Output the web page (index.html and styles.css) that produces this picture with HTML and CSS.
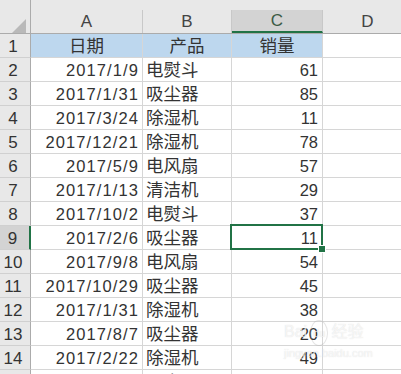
FILE: index.html
```html
<!DOCTYPE html>
<html lang="zh-CN">
<head>
    <meta charset="UTF-8">
    <title>销量表</title>
    <link rel="stylesheet" href="styles.css">
</head>
<body>
    <div class="sheet">
        <!-- Column headers -->
        <div class="row head">
            <div class="rh corner">
                <svg width="14" height="14" viewBox="0 0 14 14"><polygon points="14,0 14,14 0,14" fill="#b9b9b9"/></svg>
            </div>
            <div class="ch a"><span>A</span></div>
            <div class="ch b"><span>B</span></div>
            <div class="ch c on"><span>C</span></div>
            <div class="ch d"><span>D</span></div>
        </div>

        <div class="row">
            <div class="rh">1</div>
            <div class="cell a mid cn title">日期</div>
            <div class="cell b mid cn title">产品</div>
            <div class="cell c mid cn title">销量</div>
            <div class="cell d"></div>
        </div>
        <div class="row">
            <div class="rh">2</div>
            <div class="cell a num date">2017/1/9</div>
            <div class="cell b cn">电熨斗</div>
            <div class="cell c num">61</div>
            <div class="cell d"></div>
        </div>
        <div class="row">
            <div class="rh">3</div>
            <div class="cell a num date">2017/1/31</div>
            <div class="cell b cn">吸尘器</div>
            <div class="cell c num">85</div>
            <div class="cell d"></div>
        </div>
        <div class="row">
            <div class="rh">4</div>
            <div class="cell a num date">2017/3/24</div>
            <div class="cell b cn">除湿机</div>
            <div class="cell c num">11</div>
            <div class="cell d"></div>
        </div>
        <div class="row">
            <div class="rh">5</div>
            <div class="cell a num date">2017/12/21</div>
            <div class="cell b cn">除湿机</div>
            <div class="cell c num">78</div>
            <div class="cell d"></div>
        </div>
        <div class="row">
            <div class="rh">6</div>
            <div class="cell a num date">2017/5/9</div>
            <div class="cell b cn">电风扇</div>
            <div class="cell c num">57</div>
            <div class="cell d"></div>
        </div>
        <div class="row">
            <div class="rh">7</div>
            <div class="cell a num date">2017/1/13</div>
            <div class="cell b cn">清洁机</div>
            <div class="cell c num">29</div>
            <div class="cell d"></div>
        </div>
        <div class="row">
            <div class="rh">8</div>
            <div class="cell a num date">2017/10/2</div>
            <div class="cell b cn">电熨斗</div>
            <div class="cell c num">37</div>
            <div class="cell d"></div>
        </div>
        <div class="row">
            <div class="rh on">9</div>
            <div class="cell a num date">2017/2/6</div>
            <div class="cell b cn">吸尘器</div>
            <div class="cell c num active">11<i class="sel"><b class="handle"></b></i></div>
            <div class="cell d"></div>
        </div>
        <div class="row">
            <div class="rh">10</div>
            <div class="cell a num date">2017/9/8</div>
            <div class="cell b cn">电风扇</div>
            <div class="cell c num">54</div>
            <div class="cell d"></div>
        </div>
        <div class="row">
            <div class="rh">11</div>
            <div class="cell a num date">2017/10/29</div>
            <div class="cell b cn">吸尘器</div>
            <div class="cell c num">45</div>
            <div class="cell d"></div>
        </div>
        <div class="row">
            <div class="rh">12</div>
            <div class="cell a num date">2017/1/31</div>
            <div class="cell b cn">除湿机</div>
            <div class="cell c num">38</div>
            <div class="cell d"></div>
        </div>
        <div class="row">
            <div class="rh">13</div>
            <div class="cell a num date">2017/8/7</div>
            <div class="cell b cn">吸尘器</div>
            <div class="cell c num">20</div>
            <div class="cell d"></div>
        </div>
        <div class="row">
            <div class="rh">14</div>
            <div class="cell a num date">2017/2/22</div>
            <div class="cell b cn">除湿机</div>
            <div class="cell c num">49</div>
            <div class="cell d"></div>
        </div>
        <div class="row">
            <div class="rh">15</div>
            <div class="cell a num date">2017/10/24</div>
            <div class="cell b cn">吸尘器</div>
            <div class="cell c num">41</div>
            <div class="cell d"></div>
        </div>
    </div>

    <!-- site watermark -->
    <div class="mark">
        <div class="mark-logo">Bai<span class="paw">du</span>经验</div>
        <div class="mark-url">jingyan.baidu.com</div>
    </div>
</body>
</html>
```

FILE: styles.css
```css
/* Sheet */
body {
    margin: 0;
    width: 401px;
    height: 374px;
    overflow: hidden;
    background: #ffffff;
    font-family: 'Liberation Sans', 'Noto Sans CJK SC', sans-serif;
    color: #333333;
    position: relative;
}

.sheet {
    width: 413px;
}

.row {
    display: flex;
    height: 24px;
}

.row > div {
    box-sizing: border-box;
    flex: none;
    height: 100%;
}

/* column widths */
.rh { width: 31px; }
.a { width: 112px; }
.b { width: 89px; }
.c { width: 91px; }
.d { width: 90px; }

/* Column header row */
.row.head {
    height: 33px;
    background: #e8e8e8;
    border-bottom: 1px solid #ababab;
}

.ch {
    padding-top: 10px;
}

.ch span {
    display: flex;
    justify-content: center;
    align-items: center;
    height: 100%;
    border-right: 1px solid #c8c8c8;
    font-size: 17px;
    color: #444444;
    padding-top: 1px;
    box-sizing: border-box;
}

.ch.on span {
    background: #d3d3d3;
    border-bottom: 2px solid #217346;
    color: #3b5a45;
}

.corner {
    display: flex;
    align-items: flex-end;
    justify-content: flex-end;
    padding: 0 3px 4px 0;
}

/* Row header */
.rh {
    background: #e8e8e8;
    border-right: 1px solid #ababab;
    border-bottom: 1px solid #d0d0d0;
    font-size: 17px;
    line-height: 23px;
    text-align: center;
    padding: 1px 4px 0 0;
}

.row.head .rh {
    border-bottom: none;
}

.rh.on {
    background: #d3d3d3;
    border-right: 2px solid #217346;
}

/* Cells */
.cell {
    border-right: 1px solid #d6d6d6;
    border-bottom: 1px solid #d6d6d6;
    line-height: 23px;
    padding-top: 1px;
    white-space: nowrap;
    overflow: visible;
}

.num {
    font-size: 16.5px;
    text-align: right;
    padding-right: 4px;
}

.date {
    letter-spacing: 1.1px;
    padding-right: 3px;
}

.cn {
    font-size: 17.5px;
    padding-left: 3px;
}

.mid {
    text-align: center;
    padding-left: 0;
}

.title {
    background: #bdd7ee;
}

.active {
    position: relative;
}

/* Active cell outline and fill handle */
.sel {
    position: absolute;
    left: -2px;
    top: -2px;
    right: -1px;
    bottom: -1px;
    border: 2px solid #217346;
}

.handle {
    position: absolute;
    right: -5px;
    bottom: -5px;
    width: 6px;
    height: 6px;
    background: #217346;
    border: 1px solid #ffffff;
}

/* Watermark */
.mark {
    position: absolute;
    left: 284px;
    top: 320px;
    color: rgba(255, 255, 255, 0.7);
    text-shadow: 0 0 1px rgba(150, 150, 150, 0.35);
    pointer-events: none;
}

.mark-logo {
    font-size: 16px;
    line-height: 24px;
}

.paw {
    display: inline-block;
    font-size: 11px;
    border: 1px solid rgba(170, 170, 170, 0.3);
    border-radius: 50%;
    padding: 0 2px;
    margin: 0 3px;
}

.mark-url {
    font-size: 11px;
    line-height: 14px;
}
```
